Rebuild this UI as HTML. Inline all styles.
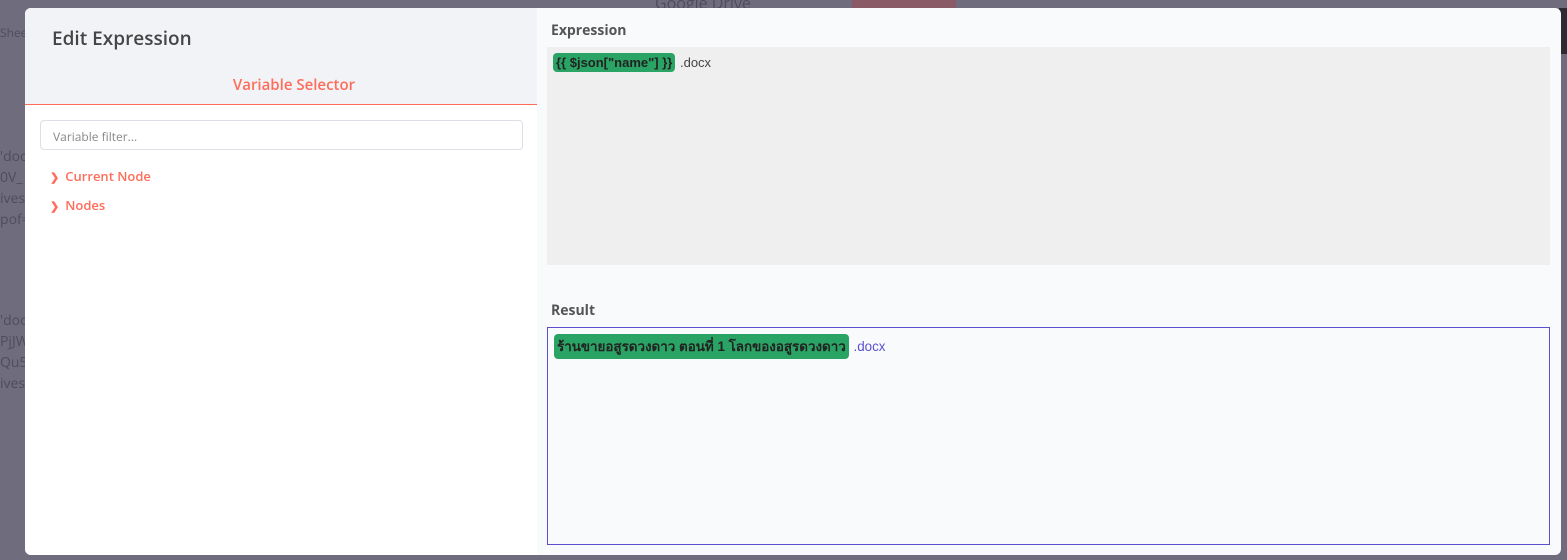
<!DOCTYPE html>
<html><head><meta charset="utf-8"><style>
*{margin:0;padding:0;box-sizing:border-box}
body{width:1567px;height:560px;background:#6f6c7e;position:relative;overflow:hidden;font-family:"Open Sans","Liberation Sans",sans-serif}
.bg{position:absolute;color:#4f4c5e;font-size:14px}
.dlg{position:absolute;left:25px;top:8px;width:1536px;height:547px;background:#f9fafc;border-radius:6px;overflow:hidden}
.left{position:absolute;left:0;top:0;width:512px;height:547px;background:#fff}
.lh{height:97px;background:#f2f3f7;border-bottom:1px solid #ff6d5a;position:relative}
.title{position:absolute;left:27px;top:17px;font-size:19px;color:#454545;font-weight:600}
.vs{position:absolute;left:13px;width:512px;text-align:center;top:67px;font-size:15px;font-weight:600;color:#ff6d5a}
.inp{position:absolute;left:15px;top:112px;width:483px;height:30px;border:1px solid #dcdfe6;border-radius:4px;font-size:12px;color:#888;padding:7px 12px}
.node{position:absolute;left:25px;font-size:13px;font-weight:600;color:#ff6d5a}
.node b{display:inline-block;margin-right:6px;font-size:11px}
.lbl{position:absolute;left:526px;font-size:14px;font-weight:bold;color:#555}
.expr{position:absolute;left:522px;top:39px;width:1003px;height:218px;background:#efefef;padding:6px 6px;font-family:"Liberation Sans",sans-serif;font-size:13px;color:#444}
.res{position:absolute;left:522px;top:319px;width:1003px;height:218px;border:1px solid #5b4fcf;padding:6px 6px;font-family:"Liberation Sans","Noto Sans CJK SC",sans-serif;font-size:13.4px;color:#5b4fcf}
.tag{display:inline-block;background:#2aa464;color:#222;font-weight:bold;border-radius:4px;padding:2px 3px;margin-right:1px}
</style></head><body>
<div class="bg" style="left:0;top:24px;font-size:12px">Shee</div>
<div class="bg" style="left:0;top:146px;line-height:21px">'doc<br>0V_<br>ives<br>pof=</div>
<div class="bg" style="left:0;top:310px;line-height:21px">'doc<br>PjJW<br>Qu5E<br>ives</div>
<div class="bg" style="left:655px;top:-8px;font-size:16px">Google Drive</div>
<div style="position:absolute;left:852px;top:0;width:104px;height:8px;background:#8a5a66"></div>
<div style="position:absolute;left:1559px;top:8px;width:8px;height:46px;background:#2c2a33"></div>
<div class="dlg">
<div class="left">
<div class="lh"><div class="title">Edit Expression</div><div class="vs">Variable Selector</div></div>
<div class="inp">Variable filter...</div>
<div class="node" style="top:159px"><b>&#x276F;</b>Current Node</div>
<div class="node" style="top:188px"><b>&#x276F;</b>Nodes</div>
</div>
<div class="lbl" style="top:13px">Expression</div>
<div class="expr"><span class="tag">{{ $json["name"] }}</span> .docx</div>
<div class="lbl" style="top:293px">Result</div>
<div class="res"><span class="tag">ร้านขายอสูรดวงดาว ตอนที่ 1 โลกของอสูรดวงดาว</span> .docx</div>
</div>
</body></html>
